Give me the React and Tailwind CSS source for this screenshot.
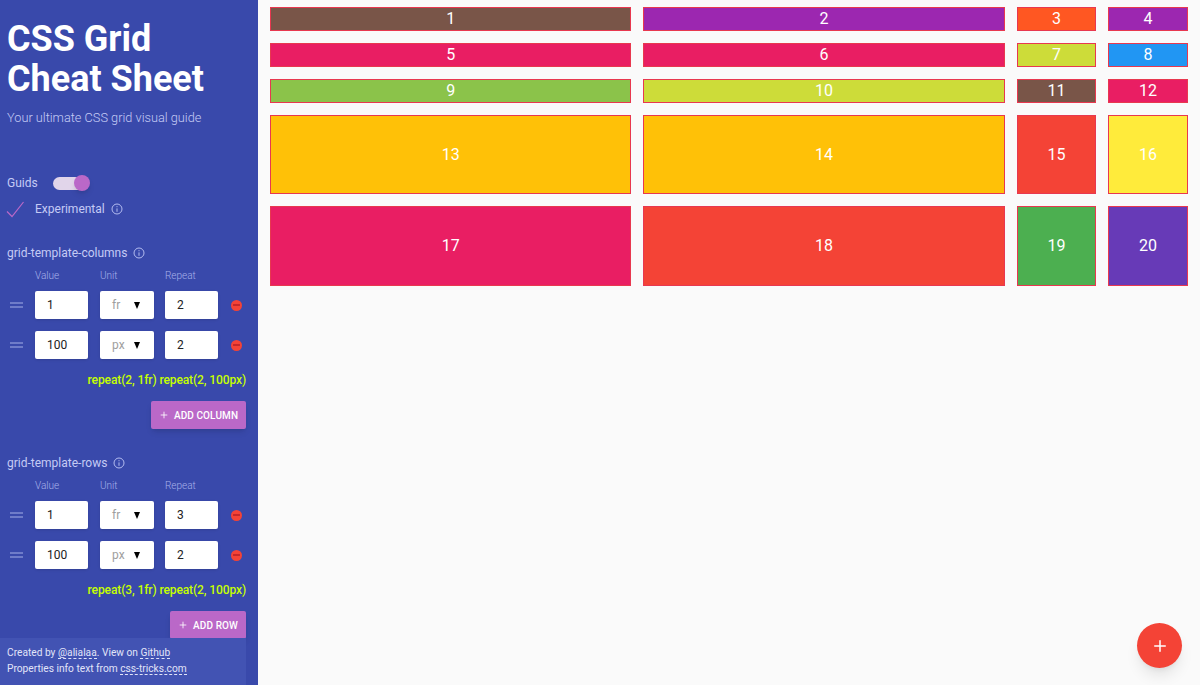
import { Plus } from "lucide-react";

const items = [
  ["1", "bg-[#795548]"],
  ["2", "bg-[#9c27b0]"],
  ["3", "bg-[#ff5722]"],
  ["4", "bg-[#9c27b0]"],
  ["5", "bg-[#e91e63]"],
  ["6", "bg-[#e91e63]"],
  ["7", "bg-[#cddc39]"],
  ["8", "bg-[#2196f3]"],
  ["9", "bg-[#8bc34a]"],
  ["10", "bg-[#cddc39]"],
  ["11", "bg-[#795548]"],
  ["12", "bg-[#e91e63]"],
  ["13", "bg-[#ffc107]"],
  ["14", "bg-[#ffc107]"],
  ["15", "bg-[#f44336]"],
  ["16", "bg-[#ffeb3b]"],
  ["17", "bg-[#e91e63]"],
  ["18", "bg-[#f44336]"],
  ["19", "bg-[#4caf50]"],
  ["20", "bg-[#673ab7]"],
];

const InfoIcon = () => (
  <svg width="12" height="12" viewBox="0 0 12 12" fill="none" className="text-[#b4bcf0]">
    <circle cx="6" cy="6" r="5" stroke="currentColor" strokeWidth="1" />
    <path d="M6 5.4V8.8M6 3.2V4.2" stroke="currentColor" strokeWidth="1" />
  </svg>
);

const TrackRow = ({ value, unit, repeat }) => (
  <div className="flex items-center h-7">
    <div className="w-[35px] pl-[10px]">
      <div className="w-[13px] h-[6px] border-y-2 border-[#6f7cc9]" />
    </div>
    <div className="w-[53px] h-7 bg-white rounded-[2px] shadow pl-3 flex items-center text-xs text-[#212121]">{value}</div>
    <div className="w-[54px] h-7 ml-3 bg-white rounded-[2px] shadow pl-3 pr-[14px] flex items-center justify-between text-xs text-[#9e9e9e]">
      <span>{unit}</span>
      <span className="w-0 h-0 border-x-[3px] border-x-transparent border-t-[7px] border-t-black" />
    </div>
    <div className="w-[53px] h-7 ml-[11px] bg-white rounded-[2px] shadow pl-3 flex items-center text-xs text-[#212121]">{repeat}</div>
    <div className="w-[11px] h-[11px] ml-[13px] rounded-full bg-[#f44336] flex items-center justify-center">
      <div className="w-[7px] h-[2px] bg-[#c62828]" />
    </div>
  </div>
);

const TrackSection = ({ title, rows, result, button, buttonWidth }) => (
  <section>
    <div className="flex items-center gap-[6px] pl-[7px] h-5 text-xs text-[#c5cbf5]">
      <span>{title}</span>
      <InfoIcon />
    </div>
    <div className="flex pl-[35px] mt-[2px] h-5 items-center text-[10px] text-[#a8b1ea] font-light">
      <span className="w-[65px]">Value</span>
      <span className="w-[65px]">Unit</span>
      <span>Repeat</span>
    </div>
    <div className="flex flex-col gap-3 mt-[6px]">
      {rows.map((row) => (
        <TrackRow key={row.value} {...row} />
      ))}
    </div>
    <div className="mt-[11px] h-5 flex items-center justify-end w-[246px] text-xs font-medium tracking-[-0.1px] text-[#c6ff00] whitespace-nowrap">{result}</div>
    <div className="mt-[11px] flex justify-end w-[246px]">
      <button className={`${buttonWidth} h-7 bg-[#ba68c8] rounded-[2px] shadow-md flex items-center justify-center gap-[5px] text-[10px] font-medium tracking-[0.1px] text-white`}>
        <Plus size={10} strokeWidth={2} />
        {button}
      </button>
    </div>
  </section>
);

export default function App() {
  return (
    <div className="flex h-screen overflow-hidden bg-[#fafafa] font-['Roboto',sans-serif] relative">
      <aside className="w-[258px] shrink-0 h-full bg-[#3949ab] flex flex-col overflow-hidden">
        <h1 className="pl-[7px] pt-[19px] text-[36px] leading-[40px] font-bold text-white">
          CSS Grid
          <br />
          Cheat Sheet
        </h1>
        <p className="pl-[7px] mt-[9px] h-5 leading-5 text-[12.75px] font-light text-[#c5cbf5]">Your ultimate CSS grid visual guide</p>

        <div className="flex items-center pl-[7px] mt-[47px] h-5 text-xs text-[#c5cbf5]">
          <span className="w-[46px]">Guids</span>
          <div className="relative w-[32px] h-[13px] rounded-full bg-[#e1d5ea]">
            <div className="absolute -right-[5px] -top-[1.5px] w-4 h-4 rounded-full bg-[#ba68c8] shadow-md" />
          </div>
        </div>
        <div className="flex items-center mt-2 h-5 text-xs text-[#c5cbf5]">
          <svg width="35" height="20" viewBox="0 0 35 20" fill="none" className="shrink-0">
            <path d="M7 12.5L12 17.5L23.5 3" stroke="#ba68c8" strokeWidth="1.2" />
          </svg>
          <span className="mr-[6px]">Experimental</span>
          <InfoIcon />
        </div>

        <div className="mt-[24px]">
          <TrackSection
            title="grid-template-columns"
            rows={[
              { value: "1", unit: "fr", repeat: "2" },
              { value: "100", unit: "px", repeat: "2" },
            ]}
            result="repeat(2, 1fr) repeat(2, 100px)"
            button="ADD COLUMN"
            buttonWidth="w-[95px]"
          />
        </div>
        <div className="mt-6">
          <TrackSection
            title="grid-template-rows"
            rows={[
              { value: "1", unit: "fr", repeat: "3" },
              { value: "100", unit: "px", repeat: "2" },
            ]}
            result="repeat(3, 1fr) repeat(2, 100px)"
            button="ADD ROW"
            buttonWidth="w-[76px]"
          />
        </div>

        <footer className="w-[246px] h-[47px] -mt-px shrink-0 bg-[#4253b3] pl-[7px] pt-[7px] text-[10.2px] leading-4 text-[#e1e4f8]">
          <div>
            Created by <a className="border-b border-dashed border-[#e1e4f8]">@alialaa</a>. View on{" "}
            <a className="border-b border-dashed border-[#e1e4f8]">Github</a>
          </div>
          <div>
            Properties info text from <a className="border-b border-dashed border-[#e1e4f8]">css-tricks.com</a>
          </div>
        </footer>
      </aside>

      <main className="flex-1 pt-[7px] pl-3 pr-3">
        <div className="grid grid-cols-[1fr_1fr_79.2px_80px] grid-rows-[24px_24px_24px_79px_80px] gap-3">
          {items.map(([label, color]) => (
            <div key={label} className={`${color} border border-[#e8384f] flex items-center justify-center text-base text-white`}>
              {label}
            </div>
          ))}
        </div>
      </main>

      <button className="absolute left-[1137px] top-[623px] w-[45px] h-[45px] rounded-full bg-[#f44336] shadow-lg flex items-center justify-center text-white">
        <Plus size={18} strokeWidth={2} />
      </button>
    </div>
  );
}
